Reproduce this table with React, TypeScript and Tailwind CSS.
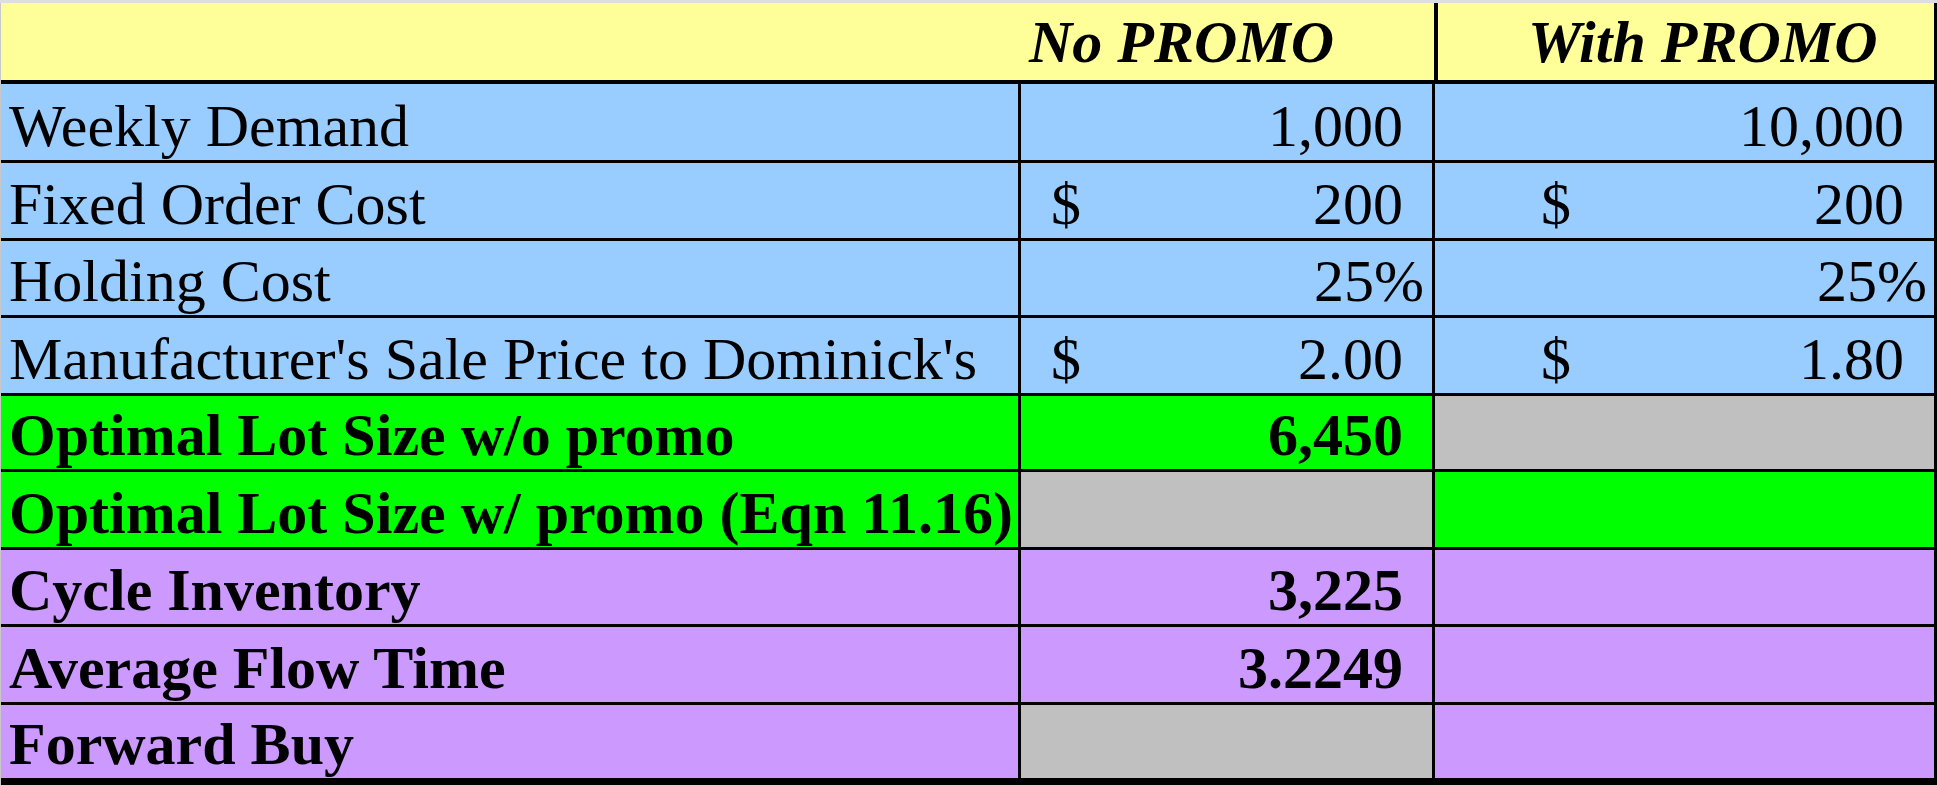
type Cell = { bg: string; value?: string; dollar?: boolean; pct?: boolean };

type Row = {
  label: string;
  bold?: boolean;
  h: string;
  bg: string;
  no: Cell;
  promo: Cell;
  last?: boolean;
};

const rows: Row[] = [
  { label: 'Weekly Demand', h: 'h-[76px]', bg: 'bg-[#99ccff]', no: { bg: 'bg-[#99ccff]', value: '1,000' }, promo: { bg: 'bg-[#99ccff]', value: '10,000' } },
  { label: 'Fixed Order Cost', h: 'h-[75px]', bg: 'bg-[#99ccff]', no: { bg: 'bg-[#99ccff]', value: '200', dollar: true }, promo: { bg: 'bg-[#99ccff]', value: '200', dollar: true } },
  { label: 'Holding Cost', h: 'h-[74px]', bg: 'bg-[#99ccff]', no: { bg: 'bg-[#99ccff]', value: '25%', pct: true }, promo: { bg: 'bg-[#99ccff]', value: '25%', pct: true } },
  { label: "Manufacturer's Sale Price to Dominick's", h: 'h-[75px]', bg: 'bg-[#99ccff]', no: { bg: 'bg-[#99ccff]', value: '2.00', dollar: true }, promo: { bg: 'bg-[#99ccff]', value: '1.80', dollar: true } },
  { label: 'Optimal Lot Size w/o promo', bold: true, h: 'h-[73px]', bg: 'bg-[#00ff00]', no: { bg: 'bg-[#00ff00]', value: '6,450' }, promo: { bg: 'bg-[#c0c0c0]' } },
  { label: 'Optimal Lot Size w/ promo (Eqn 11.16)', bold: true, h: 'h-[75px]', bg: 'bg-[#00ff00]', no: { bg: 'bg-[#c0c0c0]' }, promo: { bg: 'bg-[#00ff00]' } },
  { label: 'Cycle Inventory', bold: true, h: 'h-[74px]', bg: 'bg-[#cc99ff]', no: { bg: 'bg-[#cc99ff]', value: '3,225' }, promo: { bg: 'bg-[#cc99ff]' } },
  { label: 'Average Flow Time', bold: true, h: 'h-[75px]', bg: 'bg-[#cc99ff]', no: { bg: 'bg-[#cc99ff]', value: '3.2249' }, promo: { bg: 'bg-[#cc99ff]' } },
  { label: 'Forward Buy', bold: true, h: 'h-[73px]', bg: 'bg-[#cc99ff]', no: { bg: 'bg-[#c0c0c0]' }, promo: { bg: 'bg-[#cc99ff]' }, last: true },
];

function ValueCell({ cell, bold, wide }: { cell: Cell; bold?: boolean; wide?: boolean }) {
  return (
    <div
      className={`flex items-end justify-between pb-[4px] ${cell.bg} ${
        wide ? 'flex-1' : 'w-[414px] shrink-0 border-r-[3px] border-black'
      } ${bold ? 'font-bold' : ''}`}
    >
      <span className={wide ? 'pl-[106px]' : 'pl-[30px]'}>{cell.dollar ? '$' : ''}</span>
      <span className={cell.pct ? (wide ? 'pr-[7px]' : 'pr-[8px]') : wide ? 'pr-[30px]' : 'pr-[29px]'}>
        {cell.value ?? ''}
      </span>
    </div>
  );
}

export default function App() {
  return (
    <div className="w-[1937px] h-[785px] bg-white font-['Liberation_Serif',serif] text-[60px] leading-none text-black overflow-hidden">
      {/* top strip */}
      <div className="h-[3px] bg-[#dedede]" />

      <div className="border-l border-l-[#c8c8c8] border-r-[3px] border-r-black">
        {/* HEADER */}
        <div className="flex h-[81px] bg-[#ffff99] border-b-4 border-black font-bold italic">
          <div className="w-[1023px] shrink-0" />
          <div className="w-[414px] shrink-0 border-r-4 border-black flex items-end pb-[8px] pl-[5px]">No PROMO</div>
          <div className="flex-1 flex items-end pb-[8px] pl-[90px]">With PROMO</div>
        </div>

        {/* BODY */}
        {rows.map((r) => (
          <div
            key={r.label}
            className={`flex ${r.h} box-content border-black ${r.last ? 'border-b-[7px]' : 'border-b-[3px]'} ${
              r.bold ? 'font-bold' : ''
            }`}
          >
            <div className={`w-[1020px] shrink-0 border-r-[3px] border-black flex items-end pb-[4px] pl-[8px] whitespace-nowrap ${r.bg}`}>
              {r.label}
            </div>
            <ValueCell cell={r.no} bold={r.bold} />
            <ValueCell cell={r.promo} bold={r.bold} wide />
          </div>
        ))}
      </div>
    </div>
  );
}
